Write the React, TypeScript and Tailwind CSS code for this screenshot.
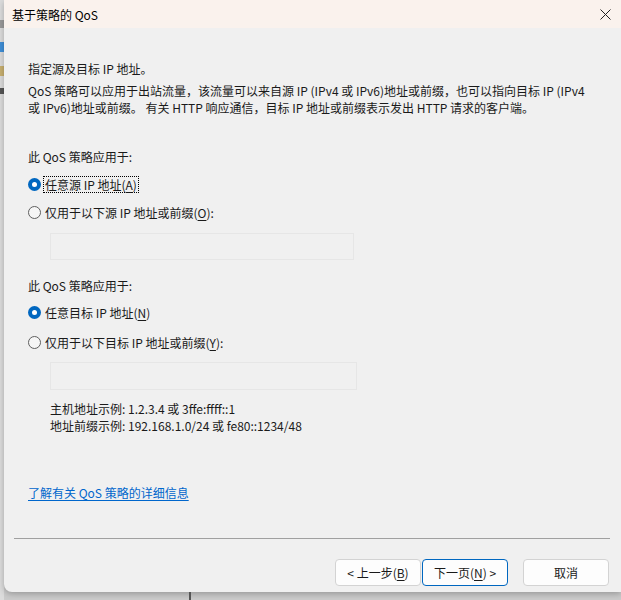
import React from "react";

const font = { fontFamily: '"Noto Sans CJK SC", "Noto Sans", sans-serif' };

function Radio(props: { checked?: boolean }) {
  if (props.checked) {
    return (
      <span className="flex h-[13px] w-[13px] items-center justify-center rounded-full bg-[#0067c0]">
        <span className="h-[5px] w-[5px] rounded-full bg-white" />
      </span>
    );
  }
  return <span className="h-[13px] w-[13px] rounded-full border border-[#5f5f5f] bg-[#f6f6f6]" />;
}

function RadioRow(props: { checked?: boolean; focused?: boolean; children: React.ReactNode }) {
  return (
    <div className="flex h-[17px] items-center gap-[2px] pl-[24px]">
      <Radio checked={props.checked} />
      <span className={props.focused ? "border border-dotted border-black px-[1px] leading-[15px]" : "px-[2px]"}>
        {props.children}
      </span>
    </div>
  );
}

function Key(props: { k: string }) {
  return <span className="underline underline-offset-2">{props.k}</span>;
}

function Btn(props: { children: React.ReactNode; primary?: boolean; className?: string }) {
  return (
    <div
      className={
        "flex h-[27px] w-[86px] items-center justify-center rounded-[4px] bg-[#fdfdfd] text-[12px] " +
        (props.primary ? "border border-[#0067c0]" : "border border-[#d3d3d3]") +
        " " +
        (props.className ?? "")
      }
    >
      {props.children}
    </div>
  );
}

export default function App() {
  return (
    <div className="relative flex h-[600px] w-[621px] overflow-hidden bg-[#cbcbcb]" style={font}>
      {/* strip of window behind */}
      <div className="flex h-[600px] w-[4px] flex-col bg-[#dcdcdc]">
        <div className="mt-[20px] h-[8px] w-[4px] bg-[#9a9a9a]" />
        <div className="mt-[14px] h-[10px] w-[4px] bg-[#3f8fd8]" />
        <div className="mt-[14px] h-[10px] w-[4px] bg-[#c8b070]" />
        <div className="mt-[12px] h-[6px] w-[4px] bg-[#555]" />
      </div>

      <div className="flex h-[592px] w-[617px] flex-col overflow-hidden rounded-bl-[8px] bg-[#f0f0f0] text-[12px] leading-[17px] text-[#1a1a1a] shadow-[0_2px_6px_rgba(0,0,0,0.25)]">
        {/* title bar */}
        <div className="flex h-[28px] items-center justify-between bg-[#faf2ed] pl-[8px] pr-[8px]">
          <span className="text-[12px] text-black">基于策略的 QoS</span>
          <svg width="11" height="11" viewBox="0 0 11 11" className="mr-[2px]">
            <path d="M0.5 0.5 L10.5 10.5 M10.5 0.5 L0.5 10.5" stroke="#222" strokeWidth="1" />
          </svg>
        </div>

        <div className="flex flex-1 flex-col pt-[32px]">
          <div className="pl-[24px]">指定源及目标 IP 地址。</div>
          <div className="mt-[5px] pl-[24px]">
            QoS 策略可以应用于出站流量，该流量可以来自源 IP (IPv4 或 IPv6)地址或前缀，也可以指向目标 IP (IPv4
            <br />
            或 IPv6)地址或前缀。 有关 HTTP 响应通信，目标 IP 地址或前缀表示发出 HTTP 请求的客户端。
          </div>

          <div className="mt-[32px] pl-[24px]">此 QoS 策略应用于:</div>
          <div className="mt-[11px]">
            <RadioRow checked focused>
              任意源 IP 地址(<Key k="A" />)
            </RadioRow>
          </div>
          <div className="mt-[11px]">
            <RadioRow>
              仅用于以下源 IP 地址或前缀(<Key k="O" />):
            </RadioRow>
          </div>
          <div className="ml-[46px] mt-[12px] h-[27px] w-[304px] border border-[#e6e6e6] bg-[#f0f0f0]" />

          <div className="mt-[17px] pl-[24px]">此 QoS 策略应用于:</div>
          <div className="mt-[10px]">
            <RadioRow checked>
              任意目标 IP 地址(<Key k="N" />)
            </RadioRow>
          </div>
          <div className="mt-[13px]">
            <RadioRow>
              仅用于以下目标 IP 地址或前缀(<Key k="Y" />):
            </RadioRow>
          </div>
          <div className="ml-[46px] mt-[11px] h-[28px] w-[307px] border border-[#e6e6e6] bg-[#f0f0f0]" />

          <div className="mt-[10px] pl-[46px]">主机地址示例: 1.2.3.4 或 3ffe:ffff::1</div>
          <div className="pl-[46px]">地址前缀示例: 192.168.1.0/24 或 fe80::1234/48</div>

          <div className="mt-[50px] pl-[24px]">
            <span className="text-[#0066cc] underline underline-offset-2">了解有关 QoS 策略的详细信息</span>
          </div>

          <div className="ml-[10px] mt-[37px] h-px w-[596px] bg-[#a0a0a0]" />

          <div className="mt-[20px] flex pl-[331px]">
            <Btn>
              &lt; 上一步(<Key k="B" />)
            </Btn>
            <Btn primary className="ml-[1px]">
              下一页(<Key k="N" />) &gt;
            </Btn>
            <Btn className="ml-[15px]">取消</Btn>
          </div>
        </div>
      </div>

      {/* window behind, bottom edge */}
      <div className="absolute bottom-0 left-[189px] h-[8px] w-[2px] bg-[#555]" />
    </div>
  );
}
